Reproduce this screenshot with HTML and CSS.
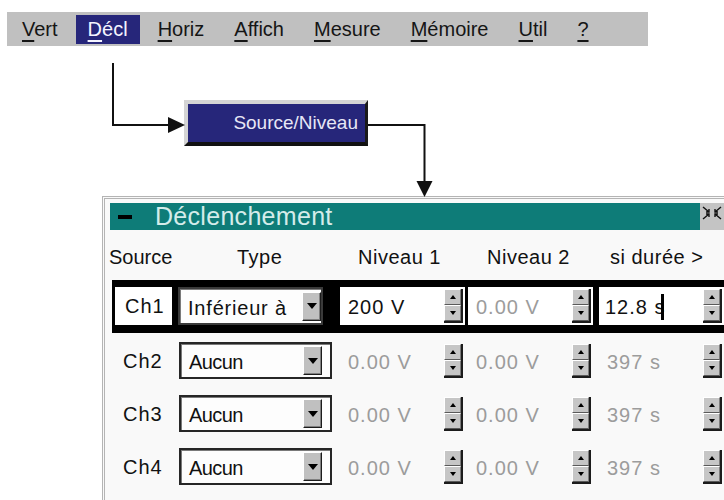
FILE: index.html
```html
<!DOCTYPE html>
<html lang="fr">
<head>
<meta charset="utf-8">
<title>Déclenchement</title>
<link rel="stylesheet" href="styles.css">
</head>
<body>
<nav class="menubar">
  <span class="menu-item"><span class="mn">V</span>ert</span>
  <span class="menu-item active"><span class="mn">D</span>écl</span>
  <span class="menu-item"><span class="mn">H</span>oriz</span>
  <span class="menu-item"><span class="mn">A</span>ffich</span>
  <span class="menu-item"><span class="mn">M</span>esure</span>
  <span class="menu-item"><span class="mn">M</span>émoire</span>
  <span class="menu-item"><span class="mn">U</span>til</span>
  <span class="menu-item"><span class="mn">?</span></span>
</nav>

<div class="diagram">
  <svg class="connectors" width="724" height="152" viewBox="0 0 724 152">
    <polyline points="113,17 113,79 170,79" fill="none" stroke="#111" stroke-width="2"/>
    <polygon points="168,71 185,79 168,87" fill="#111"/>
    <polyline points="368,79 424.5,79 424.5,137" fill="none" stroke="#111" stroke-width="2"/>
    <polygon points="416.5,135 432.5,135 424.5,151" fill="#111"/>
  </svg>
  <div class="node-button">Source/Niveau</div>
</div>

<section class="dialog">
  <header class="titlebar">
    <div class="title-main">
      <span class="title-dash"></span>
      <span class="title-text">Déclenchement</span>
    </div>
    <div class="title-icon">
      <svg width="20" height="14" viewBox="0 0 20 14">
        <g fill="none" stroke="#111" stroke-width="1.4">
          <path d="M1 1 L7 6 M4 6 H7 V3"/>
          <path d="M19 1 L13 6 M16 6 H13 V3"/>
          <path d="M1 13 L7 8 M4 8 H7 V11"/>
          <path d="M19 13 L13 8 M16 8 H13 V11"/>
        </g>
      </svg>
    </div>
  </header>

  <div class="col-headers">
    <span class="hd hd-source">Source</span>
    <span class="hd hd-type">Type</span>
    <span class="hd hd-n1">Niveau 1</span>
    <span class="hd hd-n2">Niveau 2</span>
    <span class="hd">si durée &gt;</span>
  </div>

  <div class="row selected">
    <div class="ch">Ch1</div>
    <div class="dd">
      <span class="dd-text">Inférieur à</span>
      <span class="dd-btn"><span class="tri-down-lg"></span></span>
    </div>
    <div class="val v1"><span class="num">200 V</span><span class="spin"><span class="spin-btn"><span class="tri-up"></span></span><span class="spin-btn"><span class="tri-down"></span></span></span></div>
    <div class="val v2"><span class="num dim">0.00 V</span><span class="spin"><span class="spin-btn"><span class="tri-up"></span></span><span class="spin-btn"><span class="tri-down"></span></span></span></div>
    <div class="val v3"><span class="num">12.8 s<span class="caret"></span></span><span class="spin"><span class="spin-btn"><span class="tri-up"></span></span><span class="spin-btn"><span class="tri-down"></span></span></span></div>
  </div>

  <div class="row">
    <div class="ch">Ch2</div>
    <div class="dd">
      <span class="dd-text none">Aucun</span>
      <span class="dd-btn"><span class="tri-down-lg"></span></span>
    </div>
    <div class="val v1"><span class="num dim">0.00 V</span><span class="spin"><span class="spin-btn"><span class="tri-up"></span></span><span class="spin-btn"><span class="tri-down"></span></span></span></div>
    <div class="val v2"><span class="num dim">0.00 V</span><span class="spin"><span class="spin-btn"><span class="tri-up"></span></span><span class="spin-btn"><span class="tri-down"></span></span></span></div>
    <div class="val v3"><span class="num dim">397 s</span><span class="spin"><span class="spin-btn"><span class="tri-up"></span></span><span class="spin-btn"><span class="tri-down"></span></span></span></div>
  </div>

  <div class="row">
    <div class="ch">Ch3</div>
    <div class="dd">
      <span class="dd-text none">Aucun</span>
      <span class="dd-btn"><span class="tri-down-lg"></span></span>
    </div>
    <div class="val v1"><span class="num dim">0.00 V</span><span class="spin"><span class="spin-btn"><span class="tri-up"></span></span><span class="spin-btn"><span class="tri-down"></span></span></span></div>
    <div class="val v2"><span class="num dim">0.00 V</span><span class="spin"><span class="spin-btn"><span class="tri-up"></span></span><span class="spin-btn"><span class="tri-down"></span></span></span></div>
    <div class="val v3"><span class="num dim">397 s</span><span class="spin"><span class="spin-btn"><span class="tri-up"></span></span><span class="spin-btn"><span class="tri-down"></span></span></span></div>
  </div>

  <div class="row">
    <div class="ch">Ch4</div>
    <div class="dd">
      <span class="dd-text none">Aucun</span>
      <span class="dd-btn"><span class="tri-down-lg"></span></span>
    </div>
    <div class="val v1"><span class="num dim">0.00 V</span><span class="spin"><span class="spin-btn"><span class="tri-up"></span></span><span class="spin-btn"><span class="tri-down"></span></span></span></div>
    <div class="val v2"><span class="num dim">0.00 V</span><span class="spin"><span class="spin-btn"><span class="tri-up"></span></span><span class="spin-btn"><span class="tri-down"></span></span></span></div>
    <div class="val v3"><span class="num dim">397 s</span><span class="spin"><span class="spin-btn"><span class="tri-up"></span></span><span class="spin-btn"><span class="tri-down"></span></span></span></div>
  </div>
</section>
</body>
</html>
```

FILE: styles.css
```css
html, body {
  margin: 0;
  padding: 0;
  overflow: hidden;
  background: #ffffff;
}

body {
  width: 724px;
  height: 500px;
  font-family: "Liberation Sans", Arial, sans-serif;
  font-size: 20px;
  color: #111;
}

/* ---------- menu bar ---------- */
.menubar {
  margin: 12px 0 0 7px;
  width: 641px;
  height: 34px;
  box-sizing: border-box;
  padding-left: 3px;
  background: #c0c0c0;
  display: flex;
  align-items: center;
  gap: 6px;
}

.menu-item {
  padding: 0 12px;
  height: 29px;
  line-height: 29px;
  color: #151515;
  white-space: nowrap;
}

.menu-item.active {
  background: #26267a;
  color: #f4f4ff;
}

.mn {
  text-decoration: underline;
  text-decoration-thickness: 2px;
  text-underline-offset: 4px;
}

/* ---------- diagram ---------- */
.diagram {
  position: relative;
  height: 150px;
}

.connectors {
  position: absolute;
  left: 0;
  top: 0;
  overflow: visible;
  z-index: 2;
}

.node-button {
  position: absolute;
  left: 184px;
  top: 54px;
  width: 184px;
  height: 46px;
  box-sizing: border-box;
  border-style: solid;
  border-width: 4px 3px 4px 4px;
  border-color: #d4d4d4 #1a1a1a #111 #d4d4d4;
  background: #26267a;
  color: #e6e6f6;
  font-size: 19px;
  line-height: 38px;
  text-align: right;
  padding-right: 7px;
}

/* ---------- dialog ---------- */
.dialog {
  margin-left: 102px;
  width: 640px;
  height: 320px;
  box-sizing: border-box;
  border-top: 3px double #b4b4b4;
  border-left: 3px double #b4b4b4;
  background: #f9f9f9;
  padding: 4px 0 0 5px;
}

.titlebar {
  display: flex;
  height: 27px;
}

.title-main {
  width: 590px;
  background: #0e7c78;
  display: flex;
  align-items: center;
}

.title-dash {
  width: 14px;
  height: 4px;
  background: #000;
  margin-left: 8px;
}

.title-text {
  margin-left: 23px;
  font-size: 25px;
  line-height: 27px;
  letter-spacing: 0.3px;
  color: #d4ecea;
}

.title-icon {
  width: 42px;
  background: #c4c4c4;
  display: flex;
  align-items: flex-start;
  padding: 3px 0 0 2px;
  box-sizing: border-box;
}

/* ---------- column headers ---------- */
.col-headers {
  display: flex;
  height: 50px;
  box-sizing: border-box;
  padding-top: 17px;
  line-height: 20px;
  margin-left: -1px;
  letter-spacing: 0.5px;
}

.hd-source { width: 128px; letter-spacing: 0; }
.hd-type { width: 121px; }
.hd-n1 { width: 129px; }
.hd-n2 { width: 123px; }

/* ---------- rows ---------- */
.row {
  display: flex;
  align-items: center;
  height: 53px;
  margin-left: 2px;
  box-sizing: border-box;
  padding-top: 2px;
}

.ch {
  width: 61px;
  padding-left: 11px;
  box-sizing: border-box;
  margin-right: 6px;
  letter-spacing: 1px;
  line-height: 20px;
}

.dd {
  width: 153px;
  height: 37px;
  box-sizing: border-box;
  border: 2px solid #262626;
  box-shadow: inset 1px 1px 0 #7a7a7a;
  background: #fdfdfd;
  display: flex;
  align-items: center;
  margin-right: 8px;
}

.dd-text {
  flex: 1;
  padding-left: 8px;
  letter-spacing: 0.8px;
  line-height: 20px;
  padding-top: 3px;
}

.dd-text.none {
  letter-spacing: -0.6px;
}

.dd-btn {
  width: 19px;
  height: 29px;
  box-sizing: border-box;
  margin-right: 8px;
  background: #c0c0c0;
  border: 1px solid;
  border-color: #ffffff #1c1c1c #1c1c1c #ffffff;
  box-shadow: inset -1px -1px 0 #808080;
  display: flex;
  align-items: center;
  justify-content: center;
}

.tri-down-lg {
  width: 0;
  height: 0;
  border-left: 5px solid transparent;
  border-right: 5px solid transparent;
  border-top: 6px solid #000;
}

.val {
  width: 125px;
  height: 38px;
  box-sizing: border-box;
  display: flex;
  align-items: center;
  justify-content: space-between;
  padding: 0 2px 0 8px;
}

.val.v1 { margin-right: 3px; }
.val.v2 { margin-right: 6px; }

.num {
  letter-spacing: 1px;
  line-height: 20px;
  padding-top: 2px;
  white-space: nowrap;
}

.num.dim {
  color: #9c9c9c;
}

.caret {
  display: inline-block;
  width: 3px;
  height: 26px;
  background: #000;
  margin-left: -4px;
  vertical-align: -6px;
}

.spin {
  width: 19px;
  height: 34px;
  box-sizing: border-box;
  display: flex;
  flex-direction: column;
  border-right: 2px solid #1c1c1c;
  border-bottom: 2px solid #1c1c1c;
}

.spin-btn {
  flex: 1;
  background: #c6c6c6;
  border-style: solid;
  border-width: 1px;
  border-color: #ffffff #7c7c7c #5a5a5a #ffffff;
  display: flex;
  align-items: center;
  justify-content: center;
}

.tri-up {
  width: 0;
  height: 0;
  border-left: 3px solid transparent;
  border-right: 3px solid transparent;
  border-bottom: 4px solid #000;
}

.tri-down {
  width: 0;
  height: 0;
  border-left: 3px solid transparent;
  border-right: 3px solid transparent;
  border-top: 4px solid #000;
}

/* ---------- selected (focused) row ---------- */
.row.selected {
  background: #000;
  padding: 7px 0 8px 3px;
  width: 640px;
  align-items: stretch;
}

.row.selected .ch {
  width: 57px;
  padding-left: 10px;
  background: #fff;
  display: flex;
  align-items: center;
}

.row.selected .dd {
  width: 145px;
  height: 38px;
  margin-right: 17px;
  border-color: #3a3a3a;
}

.row.selected .dd-btn {
  margin-right: 0;
}

.row.selected .val {
  background: #fff;
}

.row.selected .val.v3 {
  padding-left: 6px;
}
```
